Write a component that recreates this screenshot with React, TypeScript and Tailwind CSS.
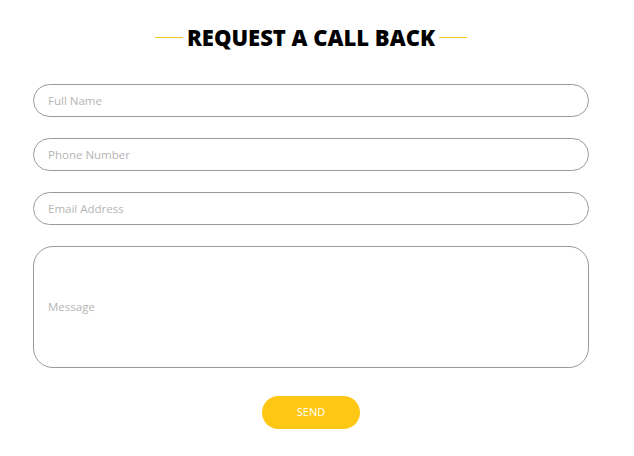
export default function App() {
  const fields = ['Full Name', 'Phone Number', 'Email Address']

  return (
    <div className="w-[634px] h-[456px] bg-white font-['Open_Sans',sans-serif]">
      <div className="w-[622px]">
        <div className="flex items-center justify-center gap-1 pt-[22px]">
          <span className="block w-[28px] h-px bg-[#f5c518]" />
          <h2 className="text-[22px] leading-[30px] font-extrabold text-black">REQUEST A CALL BACK</h2>
          <span className="block w-[28px] h-px bg-[#f5c518]" />
        </div>

        <form className="flex flex-col px-[33px] pt-[32px] gap-[21px]" onSubmit={e => e.preventDefault()}>
          {fields.map(f => (
            <input
              key={f}
              type="text"
              placeholder={f}
              className="h-[33px] w-full rounded-full border border-[#9a9a9a] px-[14px] text-[11.5px] text-gray-700 placeholder:text-[#b5b5b5] outline-none"
            />
          ))}
          <div className="h-[122px] w-full rounded-[20px] border border-[#9a9a9a] flex items-center px-[14px]">
            <textarea
              placeholder="Message"
              rows={1}
              className="w-full resize-none text-[11.5px] leading-[16px] text-gray-700 placeholder:text-[#b5b5b5] outline-none"
            />
          </div>
          <div className="flex justify-center pt-[7px]">
            <button type="submit" className="w-[98px] h-[33px] rounded-full bg-[#fdc713] text-white text-[11px]">
              SEND
            </button>
          </div>
        </form>
      </div>
    </div>
  )
}
